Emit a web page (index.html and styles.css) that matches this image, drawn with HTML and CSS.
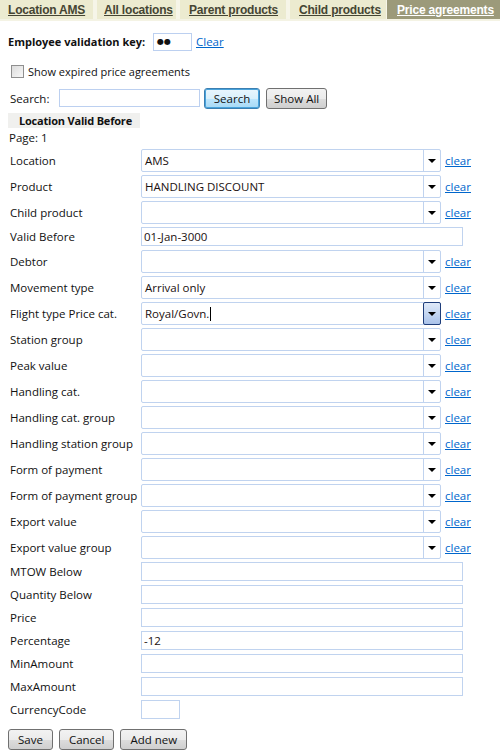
FILE: index.html
```html
<!DOCTYPE html>
<html>
<head>
<meta charset="utf-8">
<link rel="stylesheet" href="styles.css">
</head>
<body>
<div class="tabs">
  <a class="tab t1" href="#">Location AMS</a>
  <a class="tab t2" href="#">All locations</a>
  <a class="tab t3" href="#">Parent products</a>
  <a class="tab t4" href="#">Child products</a>
  <a class="tab active" href="#">Price agreements</a>
</div>

<div class="page">
  <div class="keyrow">
    <span class="keylabel">Employee validation key:</span>
    <span class="keyinput">●●</span>
    <a class="link" href="#">Clear</a>
  </div>

  <label class="chkrow"><span class="chk"></span>Show expired price agreements</label>

  <div class="searchrow">
    <span class="searchlabel">Search:</span>
    <span class="searchinput"></span>
    <span class="btn btn-focus">Search</span>
    <span class="btn">Show All</span>
  </div>

  <div class="colhead">Location Valid Before</div>
  <div class="pageno">Page: 1</div>

  <div class="form">
    <div class="row combo-row"><span class="lbl">Location</span><span class="combo"><span class="val">AMS</span><span class="dd"><i></i></span></span><a class="link clear" href="#">clear</a></div>
    <div class="row combo-row"><span class="lbl">Product</span><span class="combo"><span class="val">HANDLING DISCOUNT</span><span class="dd"><i></i></span></span><a class="link clear" href="#">clear</a></div>
    <div class="row combo-row"><span class="lbl">Child product</span><span class="combo"><span class="val"></span><span class="dd"><i></i></span></span><a class="link clear" href="#">clear</a></div>
    <div class="row text-row"><span class="lbl">Valid Before</span><span class="tinput">01-Jan-3000</span></div>
    <div class="row combo-row"><span class="lbl">Debtor</span><span class="combo"><span class="val"></span><span class="dd"><i></i></span></span><a class="link clear" href="#">clear</a></div>
    <div class="row combo-row"><span class="lbl">Movement type</span><span class="combo"><span class="val">Arrival only</span><span class="dd"><i></i></span></span><a class="link clear" href="#">clear</a></div>
    <div class="row combo-row"><span class="lbl">Flight type Price cat.</span><span class="combo"><span class="val">Royal/Govn.<span class="caret"></span></span><span class="dd dd-focus"><i></i></span></span><a class="link clear" href="#">clear</a></div>
    <div class="row combo-row"><span class="lbl">Station group</span><span class="combo"><span class="val"></span><span class="dd"><i></i></span></span><a class="link clear" href="#">clear</a></div>
    <div class="row combo-row"><span class="lbl">Peak value</span><span class="combo"><span class="val"></span><span class="dd"><i></i></span></span><a class="link clear" href="#">clear</a></div>
    <div class="row combo-row"><span class="lbl">Handling cat.</span><span class="combo"><span class="val"></span><span class="dd"><i></i></span></span><a class="link clear" href="#">clear</a></div>
    <div class="row combo-row"><span class="lbl">Handling cat. group</span><span class="combo"><span class="val"></span><span class="dd"><i></i></span></span><a class="link clear" href="#">clear</a></div>
    <div class="row combo-row"><span class="lbl">Handling station group</span><span class="combo"><span class="val"></span><span class="dd"><i></i></span></span><a class="link clear" href="#">clear</a></div>
    <div class="row combo-row"><span class="lbl">Form of payment</span><span class="combo"><span class="val"></span><span class="dd"><i></i></span></span><a class="link clear" href="#">clear</a></div>
    <div class="row combo-row"><span class="lbl">Form of payment group</span><span class="combo"><span class="val"></span><span class="dd"><i></i></span></span><a class="link clear" href="#">clear</a></div>
    <div class="row combo-row"><span class="lbl">Export value</span><span class="combo"><span class="val"></span><span class="dd"><i></i></span></span><a class="link clear" href="#">clear</a></div>
    <div class="row combo-row"><span class="lbl">Export value group</span><span class="combo"><span class="val"></span><span class="dd"><i></i></span></span><a class="link clear" href="#">clear</a></div>
    <div class="row text-row"><span class="lbl">MTOW Below</span><span class="tinput"></span></div>
    <div class="row text-row"><span class="lbl">Quantity Below</span><span class="tinput"></span></div>
    <div class="row text-row"><span class="lbl">Price</span><span class="tinput"></span></div>
    <div class="row text-row"><span class="lbl">Percentage</span><span class="tinput">-12</span></div>
    <div class="row text-row"><span class="lbl">MinAmount</span><span class="tinput"></span></div>
    <div class="row text-row"><span class="lbl">MaxAmount</span><span class="tinput"></span></div>
    <div class="row text-row"><span class="lbl">CurrencyCode</span><span class="tinput small"></span></div>
  </div>

  <div class="actions">
    <span class="btn">Save</span>
    <span class="btn">Cancel</span>
    <span class="btn">Add new</span>
  </div>
</div>
</body>
</html>
```

FILE: styles.css
```css
html, body {
  margin: 0;
  padding: 0;
  background: #fff;
}
body {
  font-family: "Open Sans", "Liberation Sans", sans-serif;
  font-size: 11.5px;
  color: #111;
  white-space: nowrap;
}
.tabs {
  display: flex;
  height: 19px;
  background: #ecebd0;
  border-bottom: 2px solid #f4f3e4;
}
.tab {
  box-sizing: border-box;
  flex: none;
  display: flex;
  align-items: center;
  font-family: "Liberation Sans", sans-serif;
  font-weight: bold;
  font-size: 12px;
  color: #454533;
  text-decoration: underline;
  border-right: 4px solid #f6f5e8;
  letter-spacing: -0.2px;
  overflow: hidden;
}
.t1 { width: 97px; padding-left: 8px; }
.t2 { width: 83px; padding-left: 7px; }
.t3 { width: 110px; padding-left: 9px; }
.t4 { width: 97px; padding-left: 9px; border-right: 1px solid #f6f5e8; }
.tab.active {
  flex: 1;
  background: #9c9a7a;
  color: #fff;
  border-right: none;
  padding-left: 10px;
}
.page {
  padding: 0 0 0 8px;
}
.keyrow {
  display: flex;
  align-items: center;
  height: 19px;
  margin-top: 11px;
}
.keylabel {
  font-weight: bold;
  font-size: 11px;
  width: 145px;
}
.keyinput {
  width: 34px;
  height: 16px;
  border: 1px solid #bcd0f0;
  font-family: "DejaVu Sans", sans-serif;
  font-size: 8px;
  line-height: 16px;
  padding-left: 3px;
  letter-spacing: 0;
}
.link {
  color: #0066cc;
  text-decoration: underline;
  font-size: 11.5px;
}
.keyrow .link { margin-left: 4px; }
.chkrow {
  display: flex;
  align-items: center;
  height: 16px;
  margin-top: 12px;
  padding-left: 3px;
  font-size: 11px;
}
.chk {
  width: 11px;
  height: 11px;
  border: 1px solid #8f8f8f;
  background: linear-gradient(135deg, #dcdcdc, #f8f8f8);
  margin-right: 4px;
}
.searchrow {
  display: flex;
  align-items: center;
  height: 22px;
  margin-top: 8px;
  font-size: 11.5px;
}
.searchlabel {
  width: 49px;
  padding-left: 2px;
}
.searchinput {
  width: 139px;
  height: 16px;
  border: 1px solid #bcd0f0;
  margin-right: 4px;
}
.btn {
  display: inline-flex;
  align-items: center;
  justify-content: center;
  height: 19px;
  padding: 0 7px;
  border: 1px solid #707070;
  border-radius: 3px;
  background: linear-gradient(#f2f2f2 0%, #ebebeb 50%, #dddddd 51%, #cfcfcf 100%);
  font-size: 11.5px;
  color: #111;
  margin-right: 6px;
}
.btn-focus {
  border-color: #3c7fb1;
  background: linear-gradient(#eaf6fd 0%, #d9f0fc 50%, #bee6fd 51%, #a7d9f5 100%);
  box-shadow: inset 0 0 0 1px #48a3dc;
  width: 40px;
}
.colhead {
  margin-top: 4px;
  width: 121px;
  height: 15px;
  background: #f0f0ee;
  font-weight: bold;
  font-size: 11px;
  line-height: 15px;
  padding-left: 11px;
  letter-spacing: -0.2px;
}
.pageno {
  height: 19px;
  line-height: 20px;
  padding-left: 1px;
  font-size: 11.5px;
}
.form {
  display: flex;
  flex-direction: column;
  padding-left: 2px;
  margin-top: 2px;
}
.row {
  display: flex;
  align-items: center;
  font-size: 11.5px;
}
.combo-row {
  height: 23px;
  margin-bottom: 3px;
}
.text-row {
  height: 19px;
  margin-bottom: 4px;
}
.lbl {
  width: 131px;
  flex: none;
}
.combo {
  display: flex;
  width: 298px;
  height: 21px;
  border: 1px solid #c0d3ef;
  border-radius: 2px;
  background: #fff;
}
.val {
  flex: 1;
  display: flex;
  align-items: center;
  padding-left: 3px;
  font-size: 11.5px;
  color: #1a1010;
}
.caret {
  display: inline-block;
  width: 1px;
  height: 14px;
  background: #000;
  margin-left: 1px;
}
.dd {
  width: 16px;
  border-left: 1px solid #c0d3ef;
  display: flex;
  align-items: center;
  justify-content: center;
}
.dd i {
  width: 0;
  height: 0;
  border-left: 4px solid transparent;
  border-right: 4px solid transparent;
  border-top: 4px solid #000;
}
.dd-focus {
  border: 1px solid #1e3d7a;
  border-radius: 2px;
  margin: -1px -1px -1px 0;
  background: linear-gradient(#dfe9f8 0%, #c5d7f2 50%, #a9c2ea 100%);
}
.clear {
  margin-left: 4px;
}
.tinput {
  display: flex;
  align-items: center;
  width: 318px;
  height: 17px;
  border: 1px solid #c0d3ef;
  padding-left: 2px;
  font-size: 11.5px;
  color: #1a1010;
}
.tinput.small {
  width: 35px;
}
.actions {
  display: flex;
  margin-top: 6px;
}
.actions .btn {
  height: 19px;
  padding: 0 9px;
}
```
